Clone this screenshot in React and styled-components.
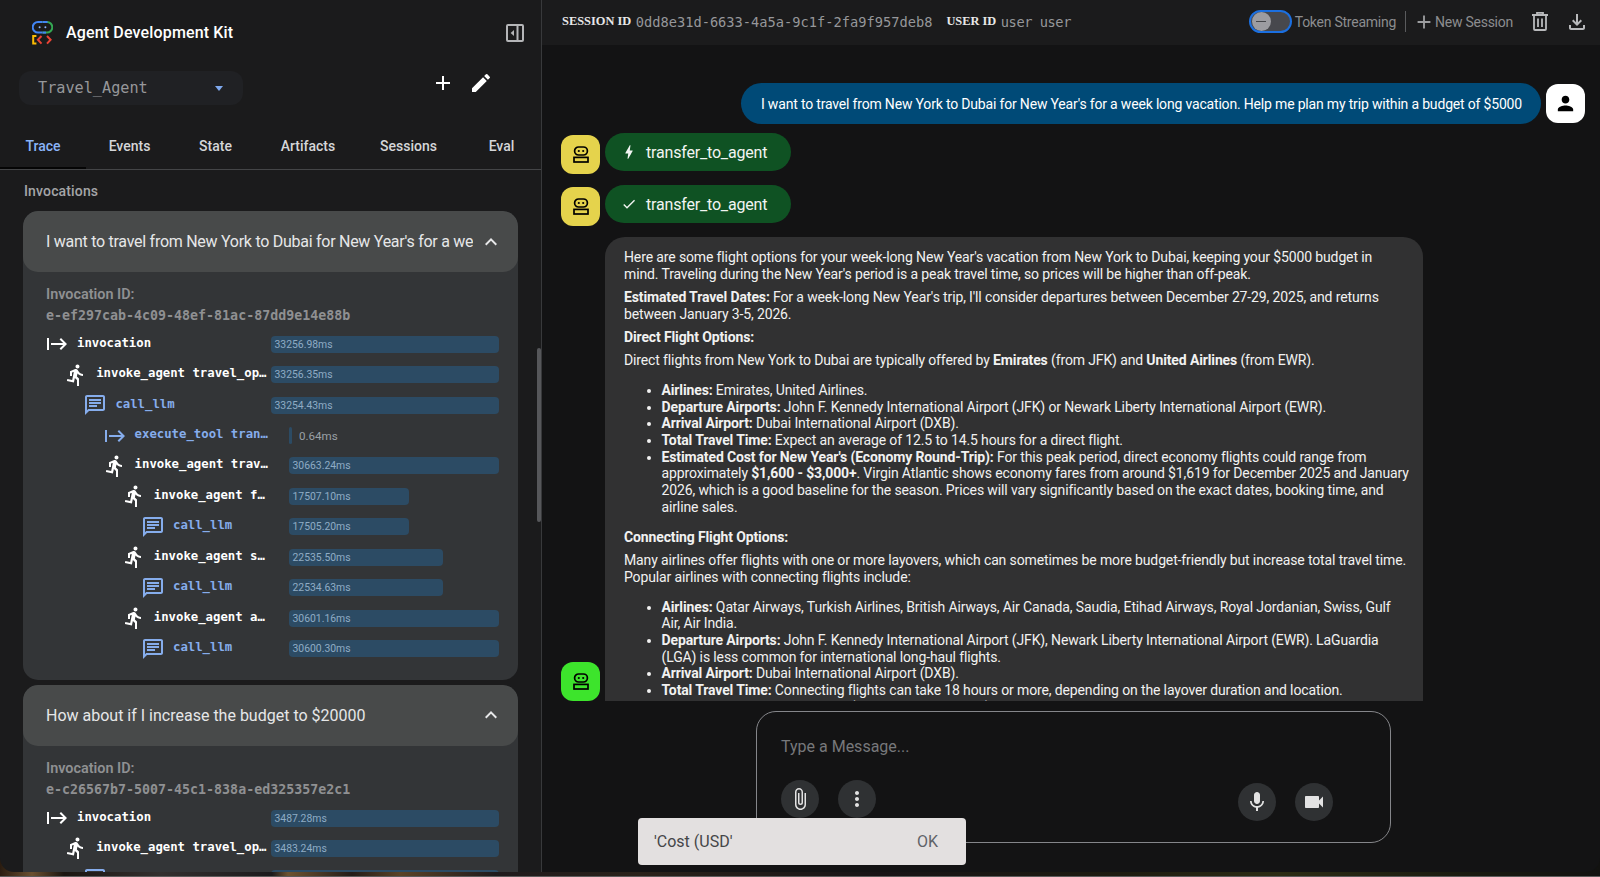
import React from 'react';
import styled, { createGlobalStyle } from 'styled-components';
import {
  MdAdd,
  MdEdit,
  MdStart,
  MdDirectionsRun,
  MdOutlineChat,
  MdExpandLess,
  MdBolt,
  MdCheck,
  MdPerson,
  MdAttachFile,
  MdMoreVert,
  MdMic,
  MdVideocam,
  MdOutlineFileDownload,
} from 'react-icons/md';

const SANS = `Roboto, "Noto Sans", Arial, sans-serif`;
const MONO = `"DejaVu Sans Mono", "Liberation Mono", monospace`;

const GlobalStyle = createGlobalStyle`
  html, body, #root {
    margin: 0;
    height: 100%;
  }
  body {
    overflow: hidden;
    font-family: ${SANS};
    background-color: #17120e;
    background-image:
      linear-gradient(to top, #5c5c5c 0, #5c5c5c 1px, transparent 1px),
      linear-gradient(90deg, #2a1c10 0, #6b5030 2%, #1b1510 4%, #33302f 10%, #1c1a1c 17%, #6d5330 18%, #241c18 22%, #5b4326 25%, #1f1a1c 31%, #2a221a 40%, #171416 55%, #1d1b10 70%, #2c2c14 80%, #191a10 92%, #121210 100%);
  }
`;

const Page = styled.div`
  height: 872px;
  display: flex;
  overflow: hidden;
  border-radius: 0 0 14px 14px;
  color: #fff;
`;

/* ---- left panel ---- */

const Sidebar = styled.aside`
  width: 541px;
  flex: none;
  display: flex;
  flex-direction: column;
  position: relative;
  background: #1b1b1c;
  border-right: 1px solid #38393b;
  overflow: hidden;
`;

const Brand = styled.div`
  height: 66px;
  flex: none;
  display: flex;
  align-items: center;
  padding: 0 17px 0 32px;
`;

const BrandName = styled.div`
  margin: -1px 0 0 13px;
  font-size: 16px;
  font-weight: 500;
  letter-spacing: 0.15px;
  flex: 1;
`;

const AgentRow = styled.div`
  flex: none;
  display: flex;
  align-items: flex-start;
  margin-top: 5px;
  padding: 0 48px 0 19px;
`;

const AgentSelect = styled.div`
  width: 224px;
  height: 34px;
  box-sizing: border-box;
  display: flex;
  align-items: center;
  justify-content: space-between;
  padding: 0 20px 0 19px;
  border-radius: 12px;
  background: #202124;
  font-family: ${MONO};
  font-size: 15.2px;
  color: #96979a;
`;

const Caret = styled.span`
  width: 0;
  height: 0;
  border-left: 4.5px solid transparent;
  border-right: 4.5px solid transparent;
  border-top: 5px solid #7fa9ee;
`;

const AgentActions = styled.div`
  margin-left: auto;
  display: flex;
  gap: 14px;
  color: #fff;
`;

const Tabs = styled.nav`
  flex: none;
  display: flex;
  height: 47px;
  margin-top: 18px;
  box-sizing: border-box;
  border-bottom: 1px solid #444547;
`;

const Tab = styled.div`
  flex: none;
  width: ${(p) => p.$width}px;
  height: 46px;
  box-sizing: border-box;
  padding-top: 2px;
  display: flex;
  align-items: center;
  justify-content: center;
  font-size: 14px;
  font-weight: 500;
  color: ${(p) => (p.$active ? '#8ab4f8' : '#d5d6d8')};
  border-bottom: 2px solid ${(p) => (p.$active ? '#050505' : 'transparent')};
`;

const TraceBody = styled.div`
  flex: 1;
  min-height: 0;
  overflow: hidden;
  padding: 0 23px 0 23px;
`;

const SectionTitle = styled.div`
  height: 41px;
  box-sizing: border-box;
  padding: 0 0 0 1px;
  display: flex;
  align-items: center;
  font-size: 14px;
  font-weight: 500;
  letter-spacing: 0.15px;
  color: #a4a5a7;
`;

const Invocation = styled.section`
  margin-bottom: 5px;
  border-radius: 15px;
  background: #333537;
  overflow: hidden;
`;

const InvocationHead = styled.div`
  height: 61px;
  display: flex;
  align-items: center;
  padding: 0 15px 0 23px;
  background: #484a4a;
  border-radius: 15px;
  font-size: 16px;
  color: #e6e7e8;
`;

const InvocationTitle = styled.div`
  flex: 1;
  min-width: 0;
  overflow: hidden;
  white-space: nowrap;
  margin-right: 6px;
  letter-spacing: ${(p) => p.$spacing || 0}px;
`;

const InvocationBody = styled.div`
  padding: 13px 19px 16px 22px;
`;

const IdLabel = styled.div`
  margin-left: 1px;
  height: 20px;
  line-height: 20px;
  font-size: 14.4px;
  font-weight: 600;
  color: #8f9092;
`;

const IdValue = styled.div`
  margin-left: 1px;
  height: 20px;
  line-height: 21px;
  margin-bottom: 4px;
  font-family: ${MONO};
  font-size: 13.3px;
  font-weight: 700;
  color: #8f9092;
  white-space: nowrap;
`;

const SpanRow = styled.div`
  height: 30.45px;
  display: flex;
  align-items: center;
`;

const SpanName = styled.div`
  flex: none;
  box-sizing: border-box;
  width: ${(p) => (p.$level < 3 ? 225.5 : 243.5)}px;
  padding-left: ${(p) => p.$level * 19.2}px;
  display: flex;
  align-items: center;
  gap: 8px;
  color: ${(p) => (p.$blue ? '#86adec' : '#fff')};
`;

const SpanText = styled.span`
  margin-top: -3px;
  font-family: ${MONO};
  font-size: 12.3px;
  font-weight: 700;
  white-space: nowrap;
`;

const BarTrack = styled.div`
  flex: 1;
  min-width: 0;
  display: flex;
  align-items: center;
`;

const Bar = styled.div`
  flex: none;
  height: 17px;
  box-sizing: border-box;
  padding-left: ${(p) => (p.$thin ? 0 : 4)}px;
  display: flex;
  align-items: center;
  border-radius: 4px;
  background: #2c4b64;
  font-size: 10.4px;
  color: #8fabc4;
  white-space: nowrap;
`;

const BarOutsideLabel = styled.span`
  margin-left: 7px;
  font-size: 11.6px;
  color: #9aa0a6;
`;

const Scrollbar = styled.div`
  position: absolute;
  top: 348px;
  right: 0;
  width: 4px;
  height: 174px;
  border-radius: 2px;
  background: #56575a;
`;

/* ---- chat panel ---- */

const Chat = styled.main`
  flex: 1;
  min-width: 0;
  display: flex;
  flex-direction: column;
  background: #131314;
`;

const TopBar = styled.header`
  flex: none;
  height: 45px;
  box-sizing: border-box;
  display: flex;
  align-items: center;
  padding: 0 11px 2px 20px;
  background: #1b1b1c;
`;

const MetaName = styled.span`
  font-family: "Liberation Serif", "Times New Roman", serif;
  font-size: 12.4px;
  font-weight: 700;
  color: #e8e8e8;
  margin-right: 4.5px;
`;

const MetaValue = styled.span`
  font-family: ${MONO};
  font-size: 13.7px;
  letter-spacing: ${(p) => p.$spacing || 0}px;
  color: #96979a;
  margin-right: ${(p) => p.$gap || 0}px;
  white-space: nowrap;
`;

const TopActions = styled.div`
  margin-left: auto;
  display: flex;
  align-items: center;
`;

const Toggle = styled.div`
  width: 43px;
  height: 23px;
  margin-right: 3px;
  box-sizing: border-box;
  display: flex;
  align-items: center;
  padding-left: 1px;
  border: 2px solid #1b6fe0;
  border-radius: 12px;
  background: #47484d;
`;

const ToggleThumb = styled.div`
  width: 19px;
  height: 19px;
  border-radius: 50%;
  background: #9c9ca1;
  display: flex;
  align-items: center;
  justify-content: center;

  &::before {
    content: '';
    width: 10px;
    height: 1.5px;
    background: #45464a;
  }
`;

const TopLabel = styled.span`
  font-size: 14px;
  letter-spacing: -0.25px;
  color: #8c8d8f;
  white-space: nowrap;
`;

const TopDivider = styled.span`
  width: 1px;
  height: 21px;
  margin: 0 7px 0 9px;
  background: #5a5b5d;
`;

const IconSlot = styled.span`
  display: inline-flex;
  margin-left: ${(p) => p.$left || 0}px;
  color: ${(p) => p.$color || '#b9babc'};
`;

const Messages = styled.div`
  flex: 1;
  min-height: 0;
  display: flex;
  flex-direction: column;
  padding-top: 38px;
  overflow: hidden;
`;

const UserRow = styled.div`
  flex: none;
  display: flex;
  justify-content: flex-end;
  align-items: center;
  gap: 5px;
  margin-bottom: 9px;
  padding-right: 15px;
`;

const UserBubble = styled.div`
  height: 41px;
  display: flex;
  align-items: center;
  padding: 0 19px 0 20px;
  border-radius: 21px;
  background: #004a77;
  font-size: 14px;
  letter-spacing: -0.178px;
  white-space: nowrap;
`;

const Avatar = styled.div`
  flex: none;
  width: 39px;
  height: 39px;
  margin-top: ${(p) => p.$nudge || 0}px;
  display: flex;
  align-items: center;
  justify-content: center;
  border-radius: 12px;
  background: ${(p) => p.$bg};
  color: #000;
`;

const ToolRow = styled.div`
  flex: none;
  height: 38px;
  display: flex;
  align-items: flex-start;
  gap: 5px;
  margin-bottom: 14px;
  padding-left: 19px;
`;

const AnswerRow = styled.div`
  flex: 1;
  min-height: 0;
  display: flex;
  align-items: flex-end;
  gap: 5px;
  padding-left: 19px;
`;

const ToolPill = styled.div`
  height: 38px;
  display: flex;
  align-items: center;
  gap: 8px;
  padding: 0 24px 0 15px;
  border-radius: 19px;
  background: #0f5223;
  font-size: 16px;
  letter-spacing: -0.18px;
  color: #f2f5f2;
`;

const PillIcon = styled.span`
  display: inline-flex;
  width: 18px;
  justify-content: center;
`;

const AnswerBubble = styled.article`
  align-self: stretch;
  width: 818px;
  box-sizing: border-box;
  overflow: hidden;
  padding: 12px 13px 0 19px;
  border-radius: 20px 20px 0 0;
  background: #313132;
  font-size: 14px;
  line-height: 16.67px;
  letter-spacing: -0.13px;
  color: #f1f1f1;
`;

const Para = styled.p`
  margin: 0 0 6.6px;
`;

const List = styled.ul`
  margin: 13.3px 0;
  padding-left: 37.5px;
`;

const Composer = styled.div`
  flex: none;
  height: 171px;
  box-sizing: border-box;
  display: flex;
  justify-content: center;
  padding: 10px 0 0 5px;
`;

const InputBox = styled.div`
  width: 635px;
  height: 132px;
  box-sizing: border-box;
  display: flex;
  flex-direction: column;
  padding: 0 57px 0 24px;
  border: 1px solid #85868a;
  border-radius: 20px;
`;

const Placeholder = styled.div`
  height: 68px;
  flex: none;
  display: flex;
  align-items: center;
  font-size: 16px;
  color: #77787b;
`;

const InputTools = styled.div`
  display: flex;
  align-items: flex-start;
  gap: 19px;
`;

const RoundButton = styled.div`
  flex: none;
  width: 38px;
  height: 38px;
  display: flex;
  align-items: center;
  justify-content: center;
  border-radius: 50%;
  background: #2f3133;
  color: #e3e3e3;
  margin-top: ${(p) => (p.$low ? 3 : 0)}px;
  margin-left: ${(p) => (p.$push ? 'auto' : 0)};
`;

const Snackbar = styled.div`
  position: fixed;
  left: 50%;
  bottom: 12px;
  transform: translateX(calc(-50% + 2px));
  width: 328px;
  height: 47px;
  box-sizing: border-box;
  display: flex;
  align-items: center;
  justify-content: space-between;
  padding: 0 28px 0 16px;
  border-radius: 4px;
  background: #e3e0e0;
  font-size: 16px;
  color: #454648;
`;

const SnackAction = styled.span`
  color: #5f6368;
`;

/* ---- drawings ---- */

const AdkLogo = () => (
  <svg width="21" height="24" viewBox="0 0 21 24" fill="none">
    <path d="M10.5 1H6a5 5 0 0 0 0 10.6h4.5" stroke="#4285f4" strokeWidth="2" />
    <path d="M10.5 1H15a5 5 0 0 1 0 10.6h-4.5" stroke="#34a853" strokeWidth="2" />
    <path d="M10.5 1H15.5" stroke="#4285f4" strokeWidth="2" />
    <path d="M10.5 11.6H14" stroke="#4285f4" strokeWidth="2" />
    <circle cx="7.6" cy="6.3" r="1" fill="#8ab4f8" />
    <circle cx="13.4" cy="6.3" r="1" fill="#8ab4f8" />
    <path d="M4.4 15H1.2v7.6h3.2" stroke="#fbbc04" strokeWidth="2" />
    <path d="M9.5 15l-3.6 3.8 3.6 3.8" stroke="#ea4335" strokeWidth="2" />
    <path d="M15 15l3.6 3.8-3.6 3.8" stroke="#ea4335" strokeWidth="2" />
  </svg>
);

const PanelCloseIcon = () => (
  <svg width="18" height="18" viewBox="0 0 18 18" fill="none">
    <rect x="1" y="1" width="16" height="16" rx="1" stroke="#b5b6b8" strokeWidth="2" />
    <path d="M11.5 1v16" stroke="#b5b6b8" strokeWidth="2" />
    <path d="M8 6v6L4.6 9z" fill="#b5b6b8" />
  </svg>
);

const RobotIcon = () => (
  <svg width="16" height="17" viewBox="0 0 16 17" fill="none">
    <rect x="1.6" y="1" width="12.8" height="8" rx="4" stroke="#000" strokeWidth="1.7" />
    <circle cx="5.8" cy="5" r="1.1" fill="#000" />
    <circle cx="10.2" cy="5" r="1.1" fill="#000" />
    <rect x="1" y="11.4" width="14" height="4.6" stroke="#000" strokeWidth="1.7" />
  </svg>
);

const TrashIcon = () => (
  <svg width="16" height="19" viewBox="0 0 16 19" fill="none">
    <path d="M0 3h16M5 2V.8h6V2" stroke="#b9babc" strokeWidth="1.8" />
    <path d="M2 3.5V17a1 1 0 0 0 1 1h10a1 1 0 0 0 1-1V3.5" stroke="#b9babc" strokeWidth="1.8" />
    <path d="M6 6.5v8.5M10 6.5v8.5" stroke="#b9babc" strokeWidth="1.8" />
  </svg>
);

/* ---- data ---- */

const TABS = [
  { label: 'Trace', width: 86 },
  { label: 'Events', width: 87 },
  { label: 'State', width: 85 },
  { label: 'Artifacts', width: 100 },
  { label: 'Sessions', width: 101 },
  { label: 'Eval', width: 85 },
];

const FIRST_TRACE = [
  { name: 'invocation', kind: 'start', level: 0, ms: 33256.98 },
  { name: 'invoke_agent travel_op…', kind: 'run', level: 1, ms: 33256.35 },
  { name: 'call_llm', kind: 'chat', level: 2, ms: 33254.43 },
  { name: 'execute_tool tran…', kind: 'tool', level: 3, ms: 0.64 },
  { name: 'invoke_agent trav…', kind: 'run', level: 3, ms: 30663.24 },
  { name: 'invoke_agent f…', kind: 'run', level: 4, ms: 17507.1 },
  { name: 'call_llm', kind: 'chat', level: 5, ms: 17505.2 },
  { name: 'invoke_agent s…', kind: 'run', level: 4, ms: 22535.5 },
  { name: 'call_llm', kind: 'chat', level: 5, ms: 22534.63 },
  { name: 'invoke_agent a…', kind: 'run', level: 4, ms: 30601.16 },
  { name: 'call_llm', kind: 'chat', level: 5, ms: 30600.3 },
];

const SECOND_TRACE = [
  { name: 'invocation', kind: 'start', level: 0, ms: 3487.28, total: 3487.28 },
  { name: 'invoke_agent travel_op…', kind: 'run', level: 1, ms: 3483.24, total: 3483.24 },
  { name: 'call_llm', kind: 'chat', level: 2, ms: 3480.1, total: 3480.1 },
];

const spanIcon = { start: MdStart, tool: MdStart, run: MdDirectionsRun, chat: MdOutlineChat };

function SpanLine({ span }) {
  const Icon = spanIcon[span.kind];
  const total = span.total || (span.level < 3 ? 33256.98 : 30663.24);
  const pct = (span.ms / total) * 100;
  const blue = span.kind === 'chat' || span.kind === 'tool';
  const label = `${span.ms.toFixed(2)}ms`;
  return (
    <SpanRow>
      <SpanName $level={span.level} $blue={blue}>
        <Icon size={24} />
        <SpanText>{span.name}</SpanText>
      </SpanName>
      <BarTrack>
        {pct < 1 ? (
          <>
            <Bar $thin style={{ width: '3.5px' }} />
            <BarOutsideLabel>{label}</BarOutsideLabel>
          </>
        ) : (
          <Bar style={{ width: `${pct}%` }}>{label}</Bar>
        )}
      </BarTrack>
    </SpanRow>
  );
}

function InvocationCard({ title, id, spans, spacing }) {
  return (
    <Invocation>
      <InvocationHead>
        <InvocationTitle $spacing={spacing}>{title}</InvocationTitle>
        <MdExpandLess size={24} color="#e6e7e8" />
      </InvocationHead>
      <InvocationBody>
        <IdLabel>Invocation ID:</IdLabel>
        <IdValue>{id}</IdValue>
        {spans.map((s, i) => (
          <SpanLine key={i} span={s} />
        ))}
      </InvocationBody>
    </Invocation>
  );
}

export default function App() {
  return (
    <>
      <GlobalStyle />
      <Page>
        <Sidebar>
          <Brand>
            <AdkLogo />
            <BrandName>Agent Development Kit</BrandName>
            <PanelCloseIcon />
          </Brand>
          <AgentRow>
            <AgentSelect>
              <span>Travel_Agent</span>
              <Caret />
            </AgentSelect>
            <AgentActions>
              <MdAdd size={24} />
              <MdEdit size={24} />
            </AgentActions>
          </AgentRow>
          <Tabs>
            {TABS.map((t, i) => (
              <Tab key={t.label} $width={t.width} $active={i === 0}>{t.label}</Tab>
            ))}
          </Tabs>
          <TraceBody>
            <SectionTitle>Invocations</SectionTitle>
            <InvocationCard
              title="I want to travel from New York to Dubai for New Year's for a week long vacation. Help me plan my trip within a budget of $5000"
              id="e-ef297cab-4c09-48ef-81ac-87dd9e14e88b"
              spans={FIRST_TRACE}
              spacing={-0.27}
            />
            <InvocationCard
              title="How about if I increase the budget to $20000"
              id="e-c26567b7-5007-45c1-838a-ed325357e2c1"
              spans={SECOND_TRACE}
            />
          </TraceBody>
          <Scrollbar />
        </Sidebar>

        <Chat>
          <TopBar>
            <MetaName>SESSION ID</MetaName>
            <MetaValue $gap={14}>0dd8e31d-6633-4a5a-9c1f-2fa9f957deb8</MetaValue>
            <MetaName>USER ID</MetaName>
            <MetaValue $spacing={-0.45}>user user</MetaValue>
            <TopActions>
              <Toggle><ToggleThumb /></Toggle>
              <TopLabel>Token Streaming</TopLabel>
              <TopDivider />
              <IconSlot $color="#9c9d9f"><MdAdd size={22} /></IconSlot>
              <TopLabel>New Session</TopLabel>
              <IconSlot $left={19}><TrashIcon /></IconSlot>
              <IconSlot $left={17}><MdOutlineFileDownload size={24} /></IconSlot>
            </TopActions>
          </TopBar>

          <Messages>
            <UserRow>
              <UserBubble>
                I want to travel from New York to Dubai for New Year's for a week long vacation. Help me plan my trip within a budget of $5000
              </UserBubble>
              <Avatar $bg="#fff"><MdPerson size={23} /></Avatar>
            </UserRow>
            <ToolRow>
              <Avatar $bg="#e5d34c" $nudge={2}><RobotIcon /></Avatar>
              <ToolPill>
                <PillIcon><MdBolt size={18} /></PillIcon>
                transfer_to_agent
              </ToolPill>
            </ToolRow>
            <ToolRow>
              <Avatar $bg="#e5d34c" $nudge={2}><RobotIcon /></Avatar>
              <ToolPill>
                <PillIcon><MdCheck size={16} /></PillIcon>
                transfer_to_agent
              </ToolPill>
            </ToolRow>
            <AnswerRow>
              <Avatar $bg="#3de42c"><RobotIcon /></Avatar>
              <AnswerBubble>
                <Para>Here are some flight options for your week-long New Year's vacation from New York to Dubai, keeping your $5000 budget in<br />mind. Traveling during the New Year's period is a peak travel time, so prices will be higher than off-peak.</Para>
                <Para><b>Estimated Travel Dates:</b> For a week-long New Year's trip, I'll consider departures between December 27-29, 2025, and returns between January 3-5, 2026.</Para>
                <Para><b>Direct Flight Options:</b></Para>
                <Para>Direct flights from New York to Dubai are typically offered by <b>Emirates</b> (from JFK) and <b>United Airlines</b> (from EWR).</Para>
                <List>
                  <li><b>Airlines:</b> Emirates, United Airlines.</li>
                  <li><b>Departure Airports:</b> John F. Kennedy International Airport (JFK) or Newark Liberty International Airport (EWR).</li>
                  <li><b>Arrival Airport:</b> Dubai International Airport (DXB).</li>
                  <li><b>Total Travel Time:</b> Expect an average of 12.5 to 14.5 hours for a direct flight.</li>
                  <li><b>Estimated Cost for New Year's (Economy Round-Trip):</b> For this peak period, direct economy flights could range from approximately <b>$1,600 - $3,000+</b>. Virgin Atlantic shows economy fares from around $1,619 for December 2025 and January 2026, which is a good baseline for the season. Prices will vary significantly based on the exact dates, booking time, and airline sales.</li>
                </List>
                <Para><b>Connecting Flight Options:</b></Para>
                <Para>Many airlines offer flights with one or more layovers, which can sometimes be more budget-friendly but increase total travel time. Popular airlines with connecting flights include:</Para>
                <List>
                  <li><b>Airlines:</b> Qatar Airways, Turkish Airlines, British Airways, Air Canada, Saudia, Etihad Airways, Royal Jordanian, Swiss, Gulf Air, Air India.</li>
                  <li><b>Departure Airports:</b> John F. Kennedy International Airport (JFK), Newark Liberty International Airport (EWR). LaGuardia (LGA) is less common for international long-haul flights.</li>
                  <li><b>Arrival Airport:</b> Dubai International Airport (DXB).</li>
                  <li><b>Total Travel Time:</b> Connecting flights can take 18 hours or more, depending on the layover duration and location.</li>
                  <li><b>Estimated Cost for New Year's (Economy Round-Trip):</b> Prices are often lower than direct flights.</li>
                </List>
              </AnswerBubble>
            </AnswerRow>
          </Messages>

          <Composer>
            <InputBox>
              <Placeholder>Type a Message...</Placeholder>
              <InputTools>
                <RoundButton><MdAttachFile size={24} /></RoundButton>
                <RoundButton><MdMoreVert size={24} /></RoundButton>
                <RoundButton $push $low><MdMic size={24} /></RoundButton>
                <RoundButton $low><MdVideocam size={24} /></RoundButton>
              </InputTools>
            </InputBox>
          </Composer>
        </Chat>
      </Page>
      <Snackbar>
        <span>'Cost (USD'</span>
        <SnackAction>OK</SnackAction>
      </Snackbar>
    </>
  );
}
